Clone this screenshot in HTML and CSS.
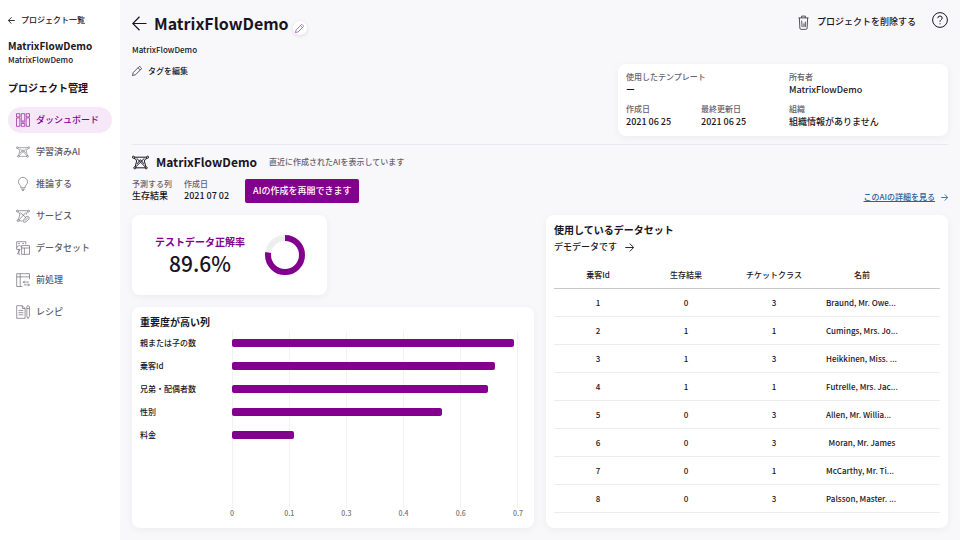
FILE: index.html
```
<!DOCTYPE html>
<html lang="ja">
  <head>
    <title>MatrixFlowDemo - ダッシュボード</title>
    <meta charset="UTF-8" />
    <meta name="viewport" content="width=device-width, initial-scale=1.0" />
    <link rel="stylesheet" href="styles.css">
  </head>
  <body>
    <!-- Shared icons -->
    <svg class="sprite" aria-hidden="true">
      <symbol id="arrow-left" viewBox="0 0 16 16">
        <path d="M15.5 8H1M8 .8L.8 8L8 15.2" />
      </symbol>
      <symbol id="arrow-right" viewBox="0 0 16 16">
        <path d="M.5 8H15M8.5 1L15.3 8L8.5 15" />
      </symbol>
      <symbol id="pencil" viewBox="0 0 20 20">
        <path d="M1 19L2.500 13L14 1.500Q15 .5 16.200 1.500L18.500 3.800Q19.500 5 18.500 6L7 17.500ZM12 3.500L16.500 8" />
      </symbol>
      <symbol id="network" viewBox="0 0 24 20">
        <circle cx="2" cy="2.500" r="1.500" /><circle cx="22" cy="2.500" r="1.500" />
        <circle cx="4" cy="17.500" r="1.500" /><circle cx="20" cy="17.500" r="1.500" />
        <path d="M3.500 2.500H20.500M2.500 4Q6.500 5 6.500 8L4.500 16M21.500 4Q17.500 5 17.500 8L19.500 16M5.500 17.500H18.500M6.500 4L19 16.500M17.500 4L5 16.500M7 12L12 6L17 12" />
      </symbol>
    </svg>

    <aside class="sidebar">
      <a class="back-link" href="#"><svg class="icon-7"><use href="#arrow-left" /></svg>プロジェクト一覧</a>
      <p class="project-name">MatrixFlowDemo</p>
      <p class="project-desc">MatrixFlowDemo</p>
      <h2>プロジェクト管理</h2>
      <nav>
        <a class="active" href="#">
          <svg viewBox="0 0 20 20"><path d="M.7 1H5.500V5.500H.7ZM.7 7H5.500V19H.7ZM7.500 1H12.500V13H7.500ZM7.500 15H12.500V19H7.500ZM14.500 1H19.300V5.500H14.500ZM14.500 7H19.300V19H14.500ZM10 10V13" /></svg>ダッシュボード
        </a>
        <a href="#"><svg><use href="#network" /></svg>学習済みAI</a>
        <a href="#">
          <svg viewBox="0 0 20 20"><path d="M7 15.500V14C7 12 3.500 10.500 3.500 6.800A6.500 6.300 0 0 1 16.500 6.800C16.500 10.500 13 12 13 14V15.500ZM7.500 17.500H12.500M8.500 19.300H11.500" /></svg>推論する
        </a>
        <a href="#">
          <svg viewBox="0 0 20 20"><circle cx="2" cy="3" r="1.400" /><circle cx="18" cy="3" r="1.400" /><circle cx="3" cy="16.500" r="1.400" /><path d="M3.400 2.500H16.600M3 4.200Q5.500 5 5.500 8L3.500 15M17 4.200Q14.500 5 14.500 8M6 5L14 12M14 5L4.500 15.500M4.500 17H9M10.500 16L14 11.500Q16 9.500 18 11Q19.800 13 18 15L14 18.500Q12 19.800 10.500 18.300Q9.700 17 10.500 16M12 17L17 12.500" /></svg>サービス
        </a>
        <a href="#">
          <svg viewBox="0 0 20 20"><path d="M6 12H1V1H14V5M1 9L5 6L8 9M6 12L1.500 19M4 12V19H6M8 6.500H19.300V19H8ZM8 10H19.300M12 10V19M3 3.500H5.500M9 3.500H11.500" /></svg>データセット
        </a>
        <a href="#">
          <svg viewBox="0 0 20 20"><path d="M9 19.300H1V1H19.300V9M1 5.500H19.300M6 1V19.300M10.500 13H18.500M12.500 11L10.500 13L12.500 15M11.500 17H19.300M17.300 15L19.300 17L17.300 19" /></svg>前処理
        </a>
        <a href="#">
          <svg viewBox="0 0 20 20"><path d="M1 1H9L13 5V19H1ZM9 1V5H13M3.500 8H10.500M3.500 11H10.500M3.500 14H10.500M15.500 3Q15.500 1 17.300 1T19.200 3V16L17.300 19.300L15.500 16ZM15.500 5H19.200" /></svg>レシピ
        </a>
      </nav>
    </aside>

    <main>
      <header>
        <div class="intro">
          <div class="title-row">
            <a class="back" href="#" aria-label="戻る"><svg class="icon-15"><use href="#arrow-left" /></svg></a>
            <h1>MatrixFlowDemo</h1>
            <button class="edit-button" aria-label="名前を編集"><svg class="icon-9"><use href="#pencil" /></svg></button>
          </div>
          <p class="description">MatrixFlowDemo</p>
          <button class="tag-button"><svg class="icon-10"><use href="#pencil" /></svg>タグを編集</button>
        </div>

        <div class="header-side">
          <div class="actions">
            <button class="delete-button">
              <svg viewBox="0 0 12 16"><path d="M.5 3H11.500M4 3V1H8V3M1.500 3L2 14Q2 15.500 3.500 15.500H8.500Q10 15.500 10 14L10.500 3M4 6L4.500 13M6.500 9V13M8 7V13" /></svg>プロジェクトを削除する
            </button>
            <button class="help-button" aria-label="ヘルプ">
              <svg viewBox="0 0 16 16"><circle cx="8" cy="8" r="7.400" /><path d="M5.800 6.200Q5.900 4 8 4T10.200 6Q10.200 7 9 7.800T8 9.800M8 11.300V12.300" /></svg>
            </button>
          </div>
          <dl class="card project-info">
            <div class="wide"><dt>使用したテンプレート</dt><dd>ー</dd></div>
            <div><dt>所有者</dt><dd>MatrixFlowDemo</dd></div>
            <div><dt>作成日</dt><dd>2021 06 25</dd></div>
            <div><dt>最終更新日</dt><dd>2021 06 25</dd></div>
            <div><dt>組織</dt><dd>組織情報がありません</dd></div>
          </dl>
        </div>
      </header>

      <section class="latest">
        <div class="latest-title">
          <svg><use href="#network" /></svg>
          <h2>MatrixFlowDemo</h2>
          <p>直近に作成されたAIを表示しています</p>
        </div>
        <div class="latest-meta">
          <dl>
            <div><dt>予測する列</dt><dd>生存結果</dd></div>
            <div><dt>作成日</dt><dd>2021 07 02</dd></div>
          </dl>
          <button class="primary">AIの作成を再開できます</button>
          <a class="detail-link" href="#"><span>このAIの詳細を見る</span><svg class="icon-7"><use href="#arrow-right" /></svg></a>
        </div>
      </section>

      <div class="panels">
        <div class="left-panels">
          <section class="card accuracy">
            <div>
              <h3>テストデータ正解率</h3>
              <p>89.6%</p>
            </div>
            <svg viewBox="0 0 40 40">
              <circle class="ring" cx="20" cy="20" r="17" />
              <circle class="value" cx="20" cy="20" r="17" pathLength="100" stroke-dasharray="77.500 100" transform="rotate(-90 20 20)" />
            </svg>
          </section>

          <section class="card importance">
            <h3>重要度が高い列</h3>
            <div class="chart">
              <ul class="chart-labels">
                <li>親または子の数</li>
                <li>乗客Id</li>
                <li>兄弟・配偶者数</li>
                <li>性別</li>
                <li>料金</li>
              </ul>
              <ul class="plot">
                <li><span class="bar" style="width: 98.8%"></span></li>
                <li><span class="bar" style="width: 92.2%"></span></li>
                <li><span class="bar" style="width: 89.7%"></span></li>
                <li><span class="bar" style="width: 73.8%"></span></li>
                <li><span class="bar" style="width: 21.6%"></span></li>
              </ul>
              <div class="axis">
                <span>0</span><span>0.1</span><span>0.3</span><span>0.4</span><span>0.6</span><span>0.7</span>
              </div>
            </div>
          </section>
        </div>

        <section class="card dataset">
          <h3>使用しているデータセット</h3>
          <a class="dataset-link" href="#">デモデータです<svg class="icon-9"><use href="#arrow-right" /></svg></a>
          <table>
            <thead>
              <tr><th>乗客Id</th><th>生存結果</th><th>チケットクラス</th><th>名前</th><th class="rest"></th></tr>
            </thead>
            <tbody>
              <tr><td>1</td><td>0</td><td>3</td><td class="cut">Braund, Mr. Owe...</td><td></td></tr>
              <tr><td>2</td><td>1</td><td>1</td><td class="cut">Cumings, Mrs. Jo...</td><td></td></tr>
              <tr><td>3</td><td>1</td><td>3</td><td class="cut">Heikkinen, Miss. ...</td><td></td></tr>
              <tr><td>4</td><td>1</td><td>1</td><td class="cut">Futrelle, Mrs. Jac...</td><td></td></tr>
              <tr><td>5</td><td>0</td><td>3</td><td class="cut">Allen, Mr. Willia...</td><td></td></tr>
              <tr><td>6</td><td>0</td><td>3</td><td>Moran, Mr. James</td><td></td></tr>
              <tr><td>7</td><td>0</td><td>1</td><td class="cut">McCarthy, Mr. Ti...</td><td></td></tr>
              <tr><td>8</td><td>0</td><td>3</td><td class="cut">Palsson, Master. ...</td><td></td></tr>
            </tbody>
          </table>
        </section>
      </div>
    </main>
  </body>
</html>
```
FILE: styles.css
```
* {
  box-sizing: border-box;
}
body {
  display: flex;
  min-height: 100vh;
  margin: 0;
  font-family: "Noto Sans CJK JP", sans-serif;
  font-size: 8px;
  font-weight: 500;
  line-height: 12px;
  color: #1a1423;
  background-color: #f8f8fa;
}
h1, h2, h3, p, ul, dl, dd {
  margin: 0;
  padding: 0;
}
ul {
  list-style: none;
}
a {
  color: inherit;
  text-decoration: none;
}
button {
  display: flex;
  align-items: center;
  padding: 0;
  border: none;
  background: none;
  font: inherit;
  color: inherit;
  cursor: pointer;
}
svg {
  flex: none;
  fill: none;
  stroke: currentColor;
  stroke-width: 1;
  overflow: visible;
}
.sprite {
  position: absolute;
  width: 0;
  height: 0;
}
.icon-7 {
  width: 7px;
  height: 7px;
  stroke-width: 2;
}
.icon-9 {
  width: 9px;
  height: 9px;
  stroke-width: 1.6;
}
.icon-10 {
  width: 10px;
  height: 10px;
  stroke-width: 1.4;
}
.icon-15 {
  width: 15px;
  height: 15px;
  stroke-width: 1.3;
}
.card {
  background-color: white;
  border-radius: 8px;
  box-shadow: 0 2px 8px rgba(20, 10, 40, 0.05);
}
dt {
  line-height: 10px;
  color: #66606e;
}
dd {
  font-size: 9px;
  line-height: 12px;
}
h3 {
  font-size: 10px;
  line-height: 14px;
}

/* Sidebar */
.sidebar {
  flex: none;
  width: 120px;
  padding: 12px 8px;
  background-color: white;
}
.back-link {
  display: flex;
  align-items: center;
  gap: 6px;
  line-height: 16px;
}
.project-name {
  margin-top: 10px;
  font-size: 10px;
  font-weight: 700;
  line-height: 16px;
}
.sidebar h2 {
  margin-top: 14px;
  font-size: 10px;
  line-height: 16px;
}
nav {
  display: flex;
  flex-direction: column;
  gap: 6px;
  margin-top: 11px;
}
nav a {
  display: flex;
  align-items: center;
  gap: 6px;
  height: 26px;
  padding: 0 8px;
  border-radius: 13px;
  font-size: 9px;
  color: #5f5a66;
}
nav svg {
  width: 14px;
  height: 14px;
  stroke-width: 0.9;
}
nav .active {
  background-color: #f6e8f8;
  color: #83008f;
}

/* Header */
main {
  flex: 1;
  min-width: 0;
  padding: 11px 12px 12px;
}
header {
  display: flex;
  justify-content: space-between;
  padding-bottom: 8px;
  border-bottom: 1px solid #e9e8ec;
}
.title-row {
  display: flex;
  align-items: flex-end;
}
.back {
  display: flex;
  align-items: center;
  height: 24px;
  margin-right: 7px;
}
h1 {
  font-size: 16px;
  line-height: 24px;
}
.edit-button {
  justify-content: center;
  width: 14px;
  height: 14px;
  margin-left: 4px;
  border-radius: 50%;
  background-color: white;
  color: #b030c0;
  box-shadow: 0 1px 4px rgba(20, 10, 40, 0.12);
}
.description {
  margin-top: 9px;
}
.tag-button {
  gap: 6px;
  margin-top: 8px;
  line-height: 14px;
}
.header-side {
  flex: none;
  width: 330px;
}
.actions {
  display: flex;
  justify-content: flex-end;
  align-items: flex-end;
  gap: 16px;
}
.delete-button {
  gap: 8px;
  height: 22px;
  font-size: 9px;
}
.delete-button svg {
  width: 11px;
  height: 15px;
  stroke-width: 0.8;
}
.help-button {
  height: 21px;
  align-items: flex-start;
}
.help-button svg {
  width: 16px;
  height: 16px;
}
.project-info {
  display: grid;
  grid-template-columns: 75px 88px 1fr;
  gap: 8px 0;
  margin-top: 31px;
  padding: 8px;
}
.wide {
  grid-column: span 2;
}
.project-info dd {
  margin-top: 2px;
}

/* Latest AI */
.latest-title {
  display: flex;
  align-items: center;
  margin-top: 9px;
}
.latest-title svg {
  width: 17px;
  height: 15px;
  stroke-width: 1.4;
}
.latest-title h2 {
  margin: 0 12px 0 7px;
  font-size: 12px;
  line-height: 16px;
}
.latest-title p {
  color: #66606e;
}
.latest-meta {
  display: flex;
  margin: 9px 0 12px;
}
.latest-meta dl {
  display: flex;
  gap: 12px;
}
.latest-meta dd {
  margin-top: 1px;
}
.primary {
  height: 24px;
  margin-left: 16px;
  padding: 0 8px;
  border-radius: 2px;
  background-color: #83008f;
  font-size: 9px;
  color: white;
}
.detail-link {
  display: flex;
  align-items: center;
  align-self: flex-end;
  gap: 6px;
  margin-left: auto;
  color: #2a6496;
}
.detail-link span {
  text-decoration: underline;
}

/* Panels */
.panels {
  display: grid;
  grid-template-columns: 1fr 1fr;
  gap: 12px;
}
.left-panels {
  display: flex;
  flex-direction: column;
  gap: 12px;
}
.accuracy {
  display: flex;
  align-items: center;
  align-self: flex-start;
  gap: 20px;
  padding: 20px 22px 20px 23px;
  text-align: center;
}
.accuracy div {
  height: 40px;
}
.accuracy h3 {
  color: #83008f;
}
.accuracy p {
  font-size: 21px;
  line-height: 28px;
}
.accuracy svg {
  width: 40px;
  height: 40px;
  stroke-width: 6;
}
.ring {
  stroke: #eeeeef;
}
.value {
  stroke: #83008f;
}
.importance {
  display: flex;
  flex-direction: column;
  flex: 1;
  padding: 8px 16px 10px 8px;
}
.chart {
  display: grid;
  grid-template-columns: 92px 1fr;
  grid-template-rows: 1fr 10px;
  flex: 1;
  margin-top: 2px;
}
.chart li {
  display: flex;
  align-items: center;
  height: 23px;
}
.plot {
  border-right: 1px solid #f2f2f4;
  background-image: repeating-linear-gradient(to right, #f2f2f4 0, #f2f2f4 1px, transparent 1px, transparent 20%);
}
.bar {
  height: 8px;
  border-radius: 2px;
  background-color: #83008f;
}
.axis {
  display: flex;
  justify-content: space-between;
  grid-column: 2;
  margin: 0 -10px;
  font-size: 7px;
  line-height: 10px;
  color: #77727d;
}
.axis span {
  width: 20px;
  text-align: center;
}
.dataset {
  padding: 8px 8px 15px;
}
.dataset-link {
  display: flex;
  align-items: center;
  gap: 8px;
  margin-top: 3px;
  font-size: 9px;
  line-height: 14px;
}
table {
  width: 100%;
  margin-top: 7px;
  border-collapse: separate;
  border-spacing: 0;
  table-layout: fixed;
}
th, td {
  width: 88px;
  height: 28px;
  padding: 0 8px;
  border-bottom: 1px solid #ededf0;
  text-align: center;
  white-space: nowrap;
}
th {
  font-weight: 500;
  border-color: #c9c8cc;
}
.rest {
  width: auto;
}
.cut {
  text-align: left;
}
```
